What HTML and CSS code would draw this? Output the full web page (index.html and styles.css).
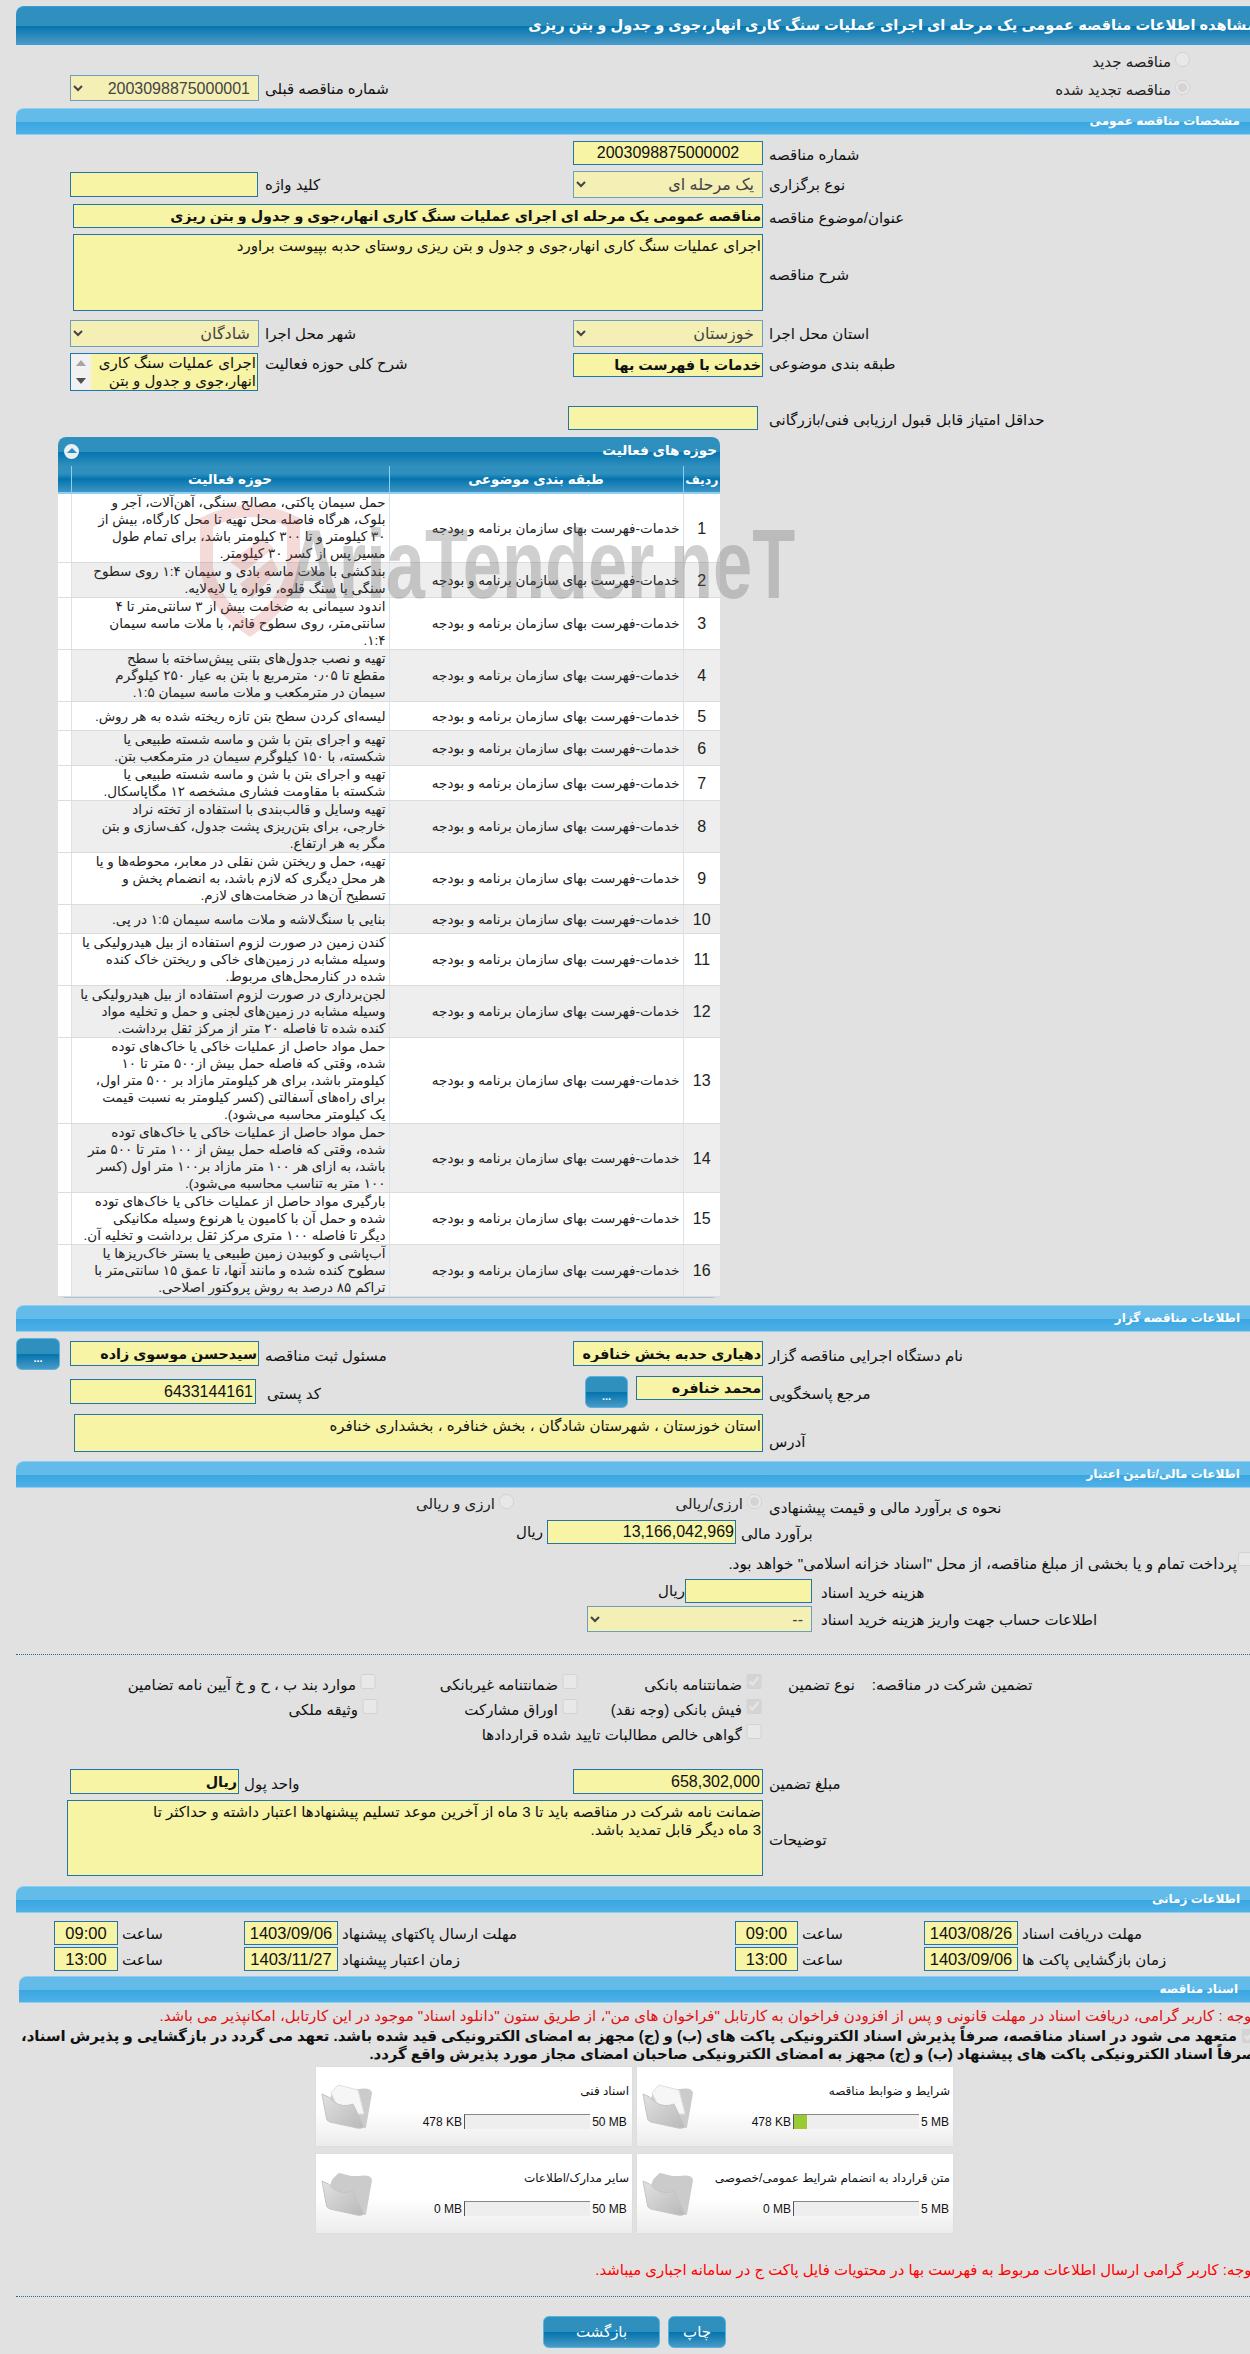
FILE: index.html
```html
<!DOCTYPE html>
<html lang="fa">
<head>
    <meta charset="UTF-8">
    <title>مشاهده اطلاعات مناقصه</title>
    <link rel="stylesheet" href="styles.css">
</head>
<body>
<div class="page">
    <div class="title-bar">مشاهده اطلاعات مناقصه عمومی یک مرحله ای اجرای عملیات سنگ کاری انهار،جوی و جدول و بتن ریزی</div>

    <div class="radio-row first"><label class="opt"><input type="radio" disabled><span>مناقصه جدید</span></label></div>
    <div class="row small-gap">
        <select class="sel ml digits" disabled dir="rtl"><option>2003098875000001</option></select>
        <div class="lbl">شماره مناقصه قبلی</div>
        <div></div>
        <div class="radio-cell"><label class="opt"><input type="radio" checked disabled><span>مناقصه تجدید شده</span></label></div>
    </div>

    <div class="section">مشخصات مناقصه عمومی</div>

    <div class="row">
        <div></div><div></div>
        <input class="in num centered" value="2003098875000002" readonly dir="rtl">
        <div class="lbl">شماره مناقصه</div>
    </div>
    <div class="row">
        <input class="in ml keyword" readonly>
        <div class="lbl">کلید واژه</div>
        <select class="sel" disabled dir="rtl"><option>یک مرحله ای</option></select>
        <div class="lbl">نوع برگزاری</div>
    </div>
    <div class="row">
        <input class="in strong span3 title-in" value="مناقصه عمومی یک مرحله ای اجرای عملیات سنگ کاری انهار،جوی و جدول و بتن ریزی" readonly dir="rtl">
        <div class="lbl">عنوان/موضوع مناقصه</div>
    </div>
    <div class="row">
        <textarea class="in span3 title-in desc" readonly dir="rtl">اجرای عملیات سنگ کاری انهار،جوی و جدول و بتن ریزی روستای حدبه بپیوست براورد</textarea>
        <div class="lbl mid">شرح مناقصه</div>
    </div>
    <div class="row gap9">
        <select class="sel ml" disabled dir="rtl"><option>شادگان</option></select>
        <div class="lbl">شهر محل اجرا</div>
        <select class="sel" disabled dir="rtl"><option>خوزستان</option></select>
        <div class="lbl">استان محل اجرا</div>
    </div>
    <div class="row">
        <div class="listbox ml">
            <div class="listbar"><i class="up"></i><i class="down"></i></div>
            <div class="listtext">اجرای عملیات سنگ کاری<br>انهار،جوی و جدول و بتن</div>
        </div>
        <div class="lbl tight">شرح کلی حوزه فعالیت</div>
        <input class="in strong" value="خدمات با فهرست بها" readonly dir="rtl">
        <div class="lbl tight">طبقه بندی موضوعی</div>
    </div>
    <div class="row gap15">
        <div></div><div></div>
        <input class="in shift" readonly>
        <div class="lbl">حداقل امتیاز قابل قبول ارزیابی فنی/بازرگانی</div>
    </div>

    <div class="panel">
        <div class="panel-title"><span class="collapse"></span>حوزه های فعالیت</div>
        <table class="grid">
            <colgroup><col class="c-no"><col class="c-cat"><col class="c-act"><col class="c-end"></colgroup>
            <tr><th>ردیف</th><th>طبقه بندی موضوعی</th><th>حوزه فعالیت</th><th></th></tr>
            <tr><td class="no">1</td><td>خدمات-فهرست بهای سازمان برنامه و بودجه</td><td class="act">حمل سیمان پاکتی، مصالح سنگی، آهن‌آلات، آجر و<br>بلوک، هرگاه فاصله محل تهیه تا محل کارگاه، بیش از<br>۳۰ کیلومتر و تا ۳۰۰ کیلومتر باشد، برای تمام طول<br>مسیر پس از کسر ۳۰ کیلومتر.</td><td></td></tr>
            <tr><td class="no">2</td><td>خدمات-فهرست بهای سازمان برنامه و بودجه</td><td class="act">بندکشی با ملات ماسه بادی و سیمان ۱:۴ روی سطوح<br>سنگی با سنگ قلوه، قواره یا لایه‌لایه.</td><td></td></tr>
            <tr><td class="no">3</td><td>خدمات-فهرست بهای سازمان برنامه و بودجه</td><td class="act">اندود سیمانی به ضخامت بیش از ۳ سانتی‌متر تا ۴<br>سانتی‌متر، روی سطوح قائم، با ملات ماسه سیمان<br>۱:۴.</td><td></td></tr>
            <tr><td class="no">4</td><td>خدمات-فهرست بهای سازمان برنامه و بودجه</td><td class="act">تهیه و نصب جدول‌های بتنی پیش‌ساخته با سطح<br>مقطع تا ۰٫۰۵ مترمربع با بتن به عیار ۲۵۰ کیلوگرم<br>سیمان در مترمکعب و ملات ماسه سیمان ۱:۵.</td><td></td></tr>
            <tr><td class="no">5</td><td>خدمات-فهرست بهای سازمان برنامه و بودجه</td><td class="act">لیسه‌ای کردن سطح بتن تازه ریخته شده به هر روش.</td><td></td></tr>
            <tr><td class="no">6</td><td>خدمات-فهرست بهای سازمان برنامه و بودجه</td><td class="act">تهیه و اجرای بتن با شن و ماسه شسته طبیعی یا<br>شکسته، با ۱۵۰ کیلوگرم سیمان در مترمکعب بتن.</td><td></td></tr>
            <tr><td class="no">7</td><td>خدمات-فهرست بهای سازمان برنامه و بودجه</td><td class="act">تهیه و اجرای بتن با شن و ماسه شسته طبیعی یا<br>شکسته با مقاومت فشاری مشخصه ۱۲ مگاپاسکال.</td><td></td></tr>
            <tr><td class="no">8</td><td>خدمات-فهرست بهای سازمان برنامه و بودجه</td><td class="act">تهیه وسایل و قالب‌بندی با استفاده از تخته نراد<br>خارجی، برای بتن‌ریزی پشت جدول، کف‌سازی و بتن<br>مگر به هر ارتفاع.</td><td></td></tr>
            <tr><td class="no">9</td><td>خدمات-فهرست بهای سازمان برنامه و بودجه</td><td class="act">تهیه، حمل و ریختن شن نقلی در معابر، محوطه‌ها و یا<br>هر محل دیگری که لازم باشد، به انضمام پخش و<br>تسطیح آن‌ها در ضخامت‌های لازم.</td><td></td></tr>
            <tr><td class="no">10</td><td>خدمات-فهرست بهای سازمان برنامه و بودجه</td><td class="act">بنایی با سنگ‌لاشه و ملات ماسه سیمان ۱:۵ در پی.</td><td></td></tr>
            <tr><td class="no">11</td><td>خدمات-فهرست بهای سازمان برنامه و بودجه</td><td class="act">کندن زمین در صورت لزوم استفاده از بیل هیدرولیکی یا<br>وسیله مشابه در زمین‌های خاکی و ریختن خاک کنده<br>شده در کنارمحل‌های مربوط.</td><td></td></tr>
            <tr><td class="no">12</td><td>خدمات-فهرست بهای سازمان برنامه و بودجه</td><td class="act">لجن‌برداری در صورت لزوم استفاده از بیل هیدرولیکی یا<br>وسیله مشابه در زمین‌های لجنی و حمل و تخلیه مواد<br>کنده شده تا فاصله ۲۰ متر از مرکز ثقل برداشت.</td><td></td></tr>
            <tr><td class="no">13</td><td>خدمات-فهرست بهای سازمان برنامه و بودجه</td><td class="act">حمل مواد حاصل از عملیات خاکی یا خاک‌های توده<br>شده، وقتی که فاصله حمل بیش از۵۰۰ متر تا ۱۰<br>کیلومتر باشد، برای هر کیلومتر مازاد بر ۵۰۰ متر اول،<br>برای راه‌های آسفالتی (کسر کیلومتر به نسبت قیمت<br>یک کیلومتر محاسبه می‌شود).</td><td></td></tr>
            <tr><td class="no">14</td><td>خدمات-فهرست بهای سازمان برنامه و بودجه</td><td class="act">حمل مواد حاصل از عملیات خاکی یا خاک‌های توده<br>شده، وقتی که فاصله حمل بیش از ۱۰۰ متر تا ۵۰۰ متر<br>باشد، به ازای هر ۱۰۰ متر مازاد بر۱۰۰ متر اول (کسر<br>۱۰۰ متر به تناسب محاسبه می‌شود).</td><td></td></tr>
            <tr><td class="no">15</td><td>خدمات-فهرست بهای سازمان برنامه و بودجه</td><td class="act">بارگیری مواد حاصل از عملیات خاکی یا خاک‌های توده<br>شده و حمل آن با کامیون یا هرنوع وسیله مکانیکی<br>دیگر تا فاصله ۱۰۰ متری مرکز ثقل برداشت و تخلیه آن.</td><td></td></tr>
            <tr><td class="no">16</td><td>خدمات-فهرست بهای سازمان برنامه و بودجه</td><td class="act">آب‌پاشی و کوبیدن زمین طبیعی یا بستر خاک‌ریزها یا<br>سطوح کنده شده و مانند آنها، تا عمق ۱۵ سانتی‌متر با<br>تراکم ۸۵ درصد به روش پروکتور اصلاحی.</td><td></td></tr>
        </table>
        <svg class="wm-logo" viewBox="0 0 100 137">
            <path fill-rule="evenodd" d="M0 18Q50 -8 100 18L100 70Q92 110 50 137Q8 110 0 70ZM13 27L13 68Q20 100 50 121Q80 100 87 68L87 27Q50 7 13 27Z"/>
            <path d="M30 62L62 38L74 48L44 72ZM40 84L72 58L78 70L52 98Z"/>
        </svg>
        <div class="wm-text">AriaTender.neT</div>
    </div>

    <div class="section">اطلاعات مناقصه گزار</div>

    <div class="row">
        <div class="with-btn">
            <button class="btn dots">...</button>
            <input class="in strong low person" value="سیدحسن موسوی زاده" readonly dir="rtl">
        </div>
        <div class="lbl drop">مسئول ثبت مناقصه</div>
        <input class="in strong low" value="دهیاری حدبه بخش خنافره" readonly dir="rtl">
        <div class="lbl drop">نام دستگاه اجرایی مناقصه گزار</div>
    </div>
    <div class="row">
        <input class="in num low ml postal" value="6433144161" readonly dir="rtl">
        <div class="lbl drop pad-postal">کد پستی</div>
        <div class="contact">
            <button class="btn dots small">...</button>
            <input class="in strong contact-in" value="محمد خنافره" readonly dir="rtl">
        </div>
        <div class="lbl drop">مرجع پاسخگویی</div>
    </div>
    <div class="row">
        <textarea class="in span3 addr" readonly dir="rtl">استان خوزستان ، شهرستان شادگان ، بخش خنافره ، بخشداری خنافره</textarea>
        <div class="lbl bottom">آدرس</div>
    </div>

    <div class="section gap-sec">اطلاعات مالی/تامین اعتبار</div>

    <div class="row">
        <div class="fin-opts">
            <label class="opt wide"><input type="radio" checked disabled><span>ارزی/ریالی</span></label>
            <label class="opt"><input type="radio" disabled><span>ارزی و ریالی</span></label>
        </div>
        <div class="lbl">نحوه ی برآورد مالی و قیمت پیشنهادی</div>
    </div>
    <div class="amount">
        <div class="unit">ریال</div>
        <input class="in num est" value="13,166,042,969" readonly dir="rtl">
        <div class="lbl">برآورد مالی</div>
    </div>
    <div class="pay">
        <input type="checkbox" disabled>
        <span>پرداخت تمام و یا بخشی از مبلغ مناقصه، از محل "اسناد خزانه اسلامی" خواهد بود.</span>
    </div>
    <div class="doc-cost">
        <div class="unit">ریال</div>
        <input class="in cost" readonly>
        <div class="lbl">هزینه خرید اسناد</div>
    </div>
    <div class="account">
        <select class="sel acc" disabled dir="rtl"><option>--</option></select>
        <div class="lbl">اطلاعات حساب جهت واریز هزینه خرید اسناد</div>
    </div>

    <div class="dotted first-dot"></div>

    <div class="guar">
        <label class="chk nudge"><input type="checkbox" disabled><span>موارد بند ب ، ح و خ آیین نامه تضامین</span></label>
        <label class="chk"><input type="checkbox" disabled><span>ضمانتنامه غیربانکی</span></label>
        <label class="chk"><input type="checkbox" checked disabled><span>ضمانتنامه بانکی</span></label>
        <div class="guar-lbl"><span>نوع تضمین</span><span>تضمین شرکت در مناقصه:</span></div>

        <label class="chk"><input type="checkbox" disabled><span>وثیقه ملکی</span></label>
        <label class="chk"><input type="checkbox" disabled><span>اوراق مشارکت</span></label>
        <label class="chk"><input type="checkbox" checked disabled><span>فیش بانکی (وجه نقد)</span></label>
        <div></div>

        <div></div><div></div>
        <label class="chk"><input type="checkbox" disabled><span>گواهی خالص مطالبات تایید شده قراردادها</span></label>
        <div></div>
    </div>

    <div class="row gap-guar">
        <input class="in strong low ml unit-in" value="ریال" readonly dir="rtl">
        <div class="lbl drop pad-unit">واحد پول</div>
        <input class="in num low" value="658,302,000" readonly dir="rtl">
        <div class="lbl drop">مبلغ تضمین</div>
    </div>
    <div class="row">
        <textarea class="in span3 notes" readonly dir="rtl">ضمانت نامه شرکت در مناقصه باید تا 3 ماه از آخرین موعد تسلیم پیشنهادها اعتبار داشته و حداکثر تا
3 ماه دیگر قابل تمدید باشد.</textarea>
        <div class="lbl mid">توضیحات</div>
    </div>

    <div class="section gap-time">اطلاعات زمانی</div>

    <div class="times">
        <input class="in num-d" value="09:00" readonly>
        <div class="lbl-t">ساعت</div>
        <input class="in num-d" value="1403/09/06" readonly>
        <div class="lbl-t">مهلت ارسال پاکتهای پیشنهاد</div>
        <input class="in num-d" value="09:00" readonly>
        <div class="lbl-t">ساعت</div>
        <input class="in num-d" value="1403/08/26" readonly>
        <div class="lbl-t">مهلت دریافت اسناد</div>

        <input class="in num-d" value="13:00" readonly>
        <div class="lbl-t">ساعت</div>
        <input class="in num-d" value="1403/11/27" readonly>
        <div class="lbl-t">زمان اعتبار پیشنهاد</div>
        <input class="in num-d" value="13:00" readonly>
        <div class="lbl-t">ساعت</div>
        <input class="in num-d" value="1403/09/06" readonly>
        <div class="lbl-t">زمان بازگشایی پاکت ها</div>
    </div>

    <div class="section docs-bar">اسناد مناقصه</div>

    <div class="note">توجه : کاربر گرامی، دریافت اسناد در مهلت قانونی و پس از افزودن فراخوان به کارتابل "فراخوان های من"، از طریق ستون "دانلود اسناد" موجود در این کارتابل، امکانپذیر می باشد.</div>
    <div class="pledge">
        <input type="checkbox" checked disabled>متعهد می شود در اسناد مناقصه، صرفاً پذیرش اسناد الکترونیکی پاکت های (ب) و (ج) مجهز به امضای الکترونیکی قید شده باشد. تعهد می گردد در بازگشایی و پذیرش اسناد،<br>صرفاً اسناد الکترونیکی پاکت های پیشنهاد (ب) و (ج) مجهز به امضای الکترونیکی صاحبان امضای مجاز مورد پذیرش واقع گردد.
    </div>

    <div class="files">
        <div class="file">
            <svg class="folder" viewBox="0 0 52 46"><use href="#folder-back"/><path class="paper" d="M10 9L17 1L37 6L43 30L20 30Z"/><use href="#folder-front"/></svg>
            <div class="file-body">
                <div class="file-name">اسناد فنی</div>
                <div class="meter"><span class="cap big">50 MB</span><div class="bar"></div><span class="cap">478 KB</span></div>
            </div>
        </div>
        <div class="file">
            <svg class="folder" viewBox="0 0 52 46"><use href="#folder-back"/><path class="paper" d="M10 9L17 1L37 6L43 30L20 30Z"/><use href="#folder-front"/></svg>
            <div class="file-body">
                <div class="file-name">شرایط و ضوابط مناقصه</div>
                <div class="meter"><span class="cap">5 MB</span><div class="bar"><div class="fill" style="width: 10%"></div></div><span class="cap">478 KB</span></div>
            </div>
        </div>
        <div class="file">
            <svg class="folder" viewBox="0 0 52 46"><use href="#folder-back"/><use href="#folder-front"/></svg>
            <div class="file-body">
                <div class="file-name">سایر مدارک/اطلاعات</div>
                <div class="meter"><span class="cap big">50 MB</span><div class="bar"></div><span class="cap">0 MB</span></div>
            </div>
        </div>
        <div class="file">
            <svg class="folder" viewBox="0 0 52 46"><use href="#folder-back"/><use href="#folder-front"/></svg>
            <div class="file-body">
                <div class="file-name">متن قرارداد به انضمام شرایط عمومی/خصوصی</div>
                <div class="meter"><span class="cap">5 MB</span><div class="bar"></div><span class="cap">0 MB</span></div>
            </div>
        </div>
    </div>

    <div class="note second">توجه: کاربر گرامی ارسال اطلاعات مربوط به فهرست بها در محتویات فایل پاکت ج در سامانه اجباری میباشد.</div>

    <div class="dotted last-dot"></div>

    <div class="actions">
        <button class="btn back">بازگشت</button>
        <button class="btn print">چاپ</button>
    </div>
    <div class="foot"></div>
</div>

<svg class="defs" width="0" height="0">
    <defs>
        <linearGradient id="fold" x1="0" y1="0" x2="1" y2="1"><stop offset="0" stop-color="#e2e2e2"/><stop offset="1" stop-color="#b8b8b8"/></linearGradient>
        <path id="folder-back" fill="#cbcbcb" stroke="#cbcbcb" stroke-width="2" stroke-linejoin="round" d="M12 9L18 3L30 6L38 6Q49 4 50 9L44 43L8 20Z"/>
        <path id="folder-front" fill="url(#fold)" stroke="#c4c4c4" stroke-linejoin="round" d="M1 10Q8 12 13 18Q22 24 32 20L43 43Q40 45 36 44L9 38Q5 37 5 32Z"/>
    </defs>
</svg>
</body>
</html>
```

FILE: styles.css
```css
html, body {
    margin: 0;
    padding: 0;
    width: 1250px;
    height: 2354px;
    overflow: hidden;
    background-color: #e1e1e1;
}

body {
    font-family: "Liberation Sans", "DejaVu Sans", sans-serif;
    font-size: 15px;
    color: #111;
}

.page {
    width: 1240px;
    margin-left: 16px;
    padding-top: 6px;
}

/* Bars */
.title-bar {
    height: 39px;
    box-sizing: border-box;
    line-height: 36px;
    direction: rtl;
    white-space: nowrap;
    font-size: 14.6px;
    font-weight: bold;
    color: #fff;
    border-radius: 8px 0 0 0;
    border-top: 1px solid #3a9be0;
    border-bottom: 1px solid #3a9be0;
    background: linear-gradient(#2f8fbf 0%, #2f8fbc 50%, #0474ae 51%, #4a9ac6 100%);
}

.section {
    height: 27px;
    box-sizing: border-box;
    margin-top: 7px;
    padding-right: 16px;
    line-height: 24px;
    direction: rtl;
    font-size: 12px;
    font-weight: bold;
    color: #fff;
    border-radius: 8px 0 0 0;
    border-top: 1px solid #8ccff2;
    border-bottom: 1px solid #8ccff2;
    background: linear-gradient(#62bbe9 0%, #62bbe9 50%, #39a6e1 51%, #4fb1e6 100%);
}

.gap-sec { margin-top: 9px; }
.gap-time { margin-top: 10px; }
.docs-bar { margin-top: 5px; margin-left: 3px; padding-right: 18px; }

/* Form rows */
.row {
    display: grid;
    grid-template-columns: 243px 314px 190px 1fr;
    align-items: start;
    margin-top: 6px;
}

.small-gap { margin-top: 3px; }
.gap9 { margin-top: 9px; }
.gap15 { margin-top: 15px; }
.gap-guar { margin-top: 17px; }

.lbl {
    direction: rtl;
    text-align: left;
    white-space: nowrap;
    padding-left: 6px;
    height: 24px;
    line-height: 28px;
}

.lbl.mid { align-self: center; }
.lbl.tight { height: auto; line-height: 18px; padding-top: 2px; }
.lbl.drop { padding-top: 4px; }
.lbl.bottom { align-self: end; height: 20px; line-height: 20px; }
.pad-postal { padding-left: 8px; }
.pad-unit { margin-left: -21px; }

.in {
    height: 24px;
    width: 100%;
    box-sizing: border-box;
    margin: 0;
    padding: 0 1px;
    font-family: "Liberation Sans", "DejaVu Sans", sans-serif;
    font-size: 15px;
    color: #111;
    background-color: #f7f4a5;
    border: 1px solid #2275a8;
    border-radius: 0;
    outline: none;
    resize: none;
    overflow: hidden;
    display: block;
}

textarea.in { padding: 2px 1px; line-height: 18px; }
.num { font-size: 16px; text-align: right; padding-right: 2px; }
.centered { text-align: center; padding: 0; }
.strong { font-size: 14.3px; font-weight: bold; }
.low { margin-top: 3px; height: 25px; }

.sel {
    height: 27px;
    width: 100%;
    box-sizing: border-box;
    margin: 0;
    padding: 0 4px;
    font-family: "Liberation Sans", "DejaVu Sans", sans-serif;
    font-size: 16px;
    color: #444;
    opacity: 1;
    background-color: #f3efb5;
    border: 1px solid #6d9dbf;
    border-radius: 0;
}

.digits { height: 26px; }

.ml { margin-left: 54px; width: calc(100% - 54px); }
.keyword { margin-top: 1px; width: 188px; height: 25px; }
.postal { width: 186px; }
.unit-in { width: 169px; }
.span3 { grid-column: 1 / 4; }
.title-in { margin-left: 57px; width: calc(100% - 57px); }
.desc { height: 77px; }
.addr { height: 38px; margin-left: 58px; width: calc(100% - 58px); }
.notes { height: 76px; margin-left: 51px; width: calc(100% - 51px); }
.shift { margin-left: -5px; }

.listbox {
    display: flex;
    height: 38px;
    box-sizing: border-box;
    width: 188px;
    background-color: #f7f4a5;
    border: 1px solid #2275a8;
    overflow: hidden;
}

.listbar {
    width: 20px;
    flex: none;
    background-color: #f1f1f1;
    display: flex;
    flex-direction: column;
    align-items: center;
    justify-content: space-around;
}

.listbar i {
    width: 0;
    height: 0;
    border-left: 5px solid transparent;
    border-right: 5px solid transparent;
}

.listbar .up { border-bottom: 6px solid #a5a5a5; }
.listbar .down { border-top: 6px solid #505050; }

.listtext {
    flex: 1;
    direction: rtl;
    white-space: nowrap;
    line-height: 18px;
    padding-right: 1px;
}

/* Radios and checks */
.radio-row {
    direction: rtl;
    padding-right: 66px;
}

.first { margin-top: 7px; height: 20px; }

.radio-cell {
    direction: rtl;
    padding-right: 66px;
    padding-top: 5px;
}

.opt {
    display: inline-flex;
    direction: rtl;
    align-items: flex-start;
    gap: 4px;
    white-space: nowrap;
    color: #222;
    line-height: 20px;
}

.opt input, .chk input, .pay input, .pledge input {
    margin: 0;
    opacity: .55;
    flex: none;
}

.opt input { width: 15px; height: 15px; }

.fin-opts {
    grid-column: 1 / 4;
    display: flex;
    direction: rtl;
    padding-right: 1px;
    height: 24px;
}

.opt.wide { width: 248px; }

/* Lines that leave the main grid */
.amount, .doc-cost, .account {
    display: flex;
    align-items: flex-start;
}

.amount { margin-top: 2px; margin-left: 503px; }
.doc-cost { margin-top: 7px; margin-left: 646px; }
.account { margin-top: 3px; margin-left: 571px; }

.unit { direction: rtl; line-height: 24px; width: 24px; margin-right: 4px; text-align: left; }
.doc-cost .unit { margin-right: 0; width: 23px; }
.est { width: 189px; padding-right: 1px; }
.cost { width: 127px; }
.acc { width: 225px; height: 26px; }
.doc-cost .lbl, .account .lbl { padding-left: 9px; }
.amount .lbl { padding-left: 5px; }

.pay {
    display: flex;
    direction: rtl;
    margin-top: 8px;
    padding-right: 4px;
    height: 20px;
    gap: 1px;
    align-items: flex-start;
    font-size: 15.3px;
    line-height: 24px;
    white-space: nowrap;
}

.pay input { width: 14px; height: 14px; }

.dotted { border-top: 1px dotted #1c6e9e; }
.first-dot { margin-top: 22px; }
.last-dot { margin-top: 16px; }

/* Guarantee */
.guar {
    display: grid;
    grid-template-columns: 362px 200px 184px 1fr;
    grid-auto-rows: 25px;
    margin-top: 19px;
}

.chk {
    display: flex;
    direction: rtl;
    align-items: flex-start;
    gap: 4px;
    white-space: nowrap;
}

.chk input { width: 16px; height: 15px; }
.chk span { line-height: 22px; }
.nudge { padding-right: 2px; }

.guar-lbl {
    display: flex;
    gap: 17px;
    padding-left: 26px;
    line-height: 22px;
    white-space: nowrap;
}

.guar-lbl span { direction: rtl; }

/* Buttons */
.btn {
    display: block;
    margin: 0;
    padding: 0;
    font-family: "Liberation Sans", "DejaVu Sans", sans-serif;
    color: #fff;
    border: 1px solid #59b3e0;
    border-radius: 6px;
    background: linear-gradient(#2f8fbf 0%, #2f8fbc 50%, #0474ae 51%, #4a9ac6 100%);
}

.dots { width: 44px; height: 32px; font-weight: bold; font-size: 11px; padding-top: 8px; }
.dots.small { width: 43px; }

.with-btn { display: flex; gap: 10px; }
.person { width: 189px; }

.contact { display: flex; justify-content: flex-end; gap: 8px; }
.contact-in { width: 127px; height: 24px; flex: none; }

/* Activity panel */
.panel {
    position: relative;
    width: 662px;
    margin: 7px 0 0 42px;
    background-color: #fff;
    border-radius: 8px;
    border-bottom: 1px solid #a8c4d8;
}

.panel-title {
    height: 29px;
    box-sizing: border-box;
    padding-right: 3px;
    line-height: 27px;
    direction: rtl;
    font-size: 13.5px;
    font-weight: bold;
    color: #fff;
    border-radius: 8px 8px 0 0;
    background: linear-gradient(#2f8fbf 0%, #2f8fbc 50%, #0474ae 51%, #2f8fbc 100%);
}

.collapse {
    position: absolute;
    left: 6px;
    top: 7px;
    width: 15px;
    height: 15px;
    border-radius: 50%;
    background-color: #e8eff5;
}

.collapse::after {
    content: "";
    position: absolute;
    left: 3px;
    top: 4px;
    border-left: 5px solid transparent;
    border-right: 5px solid transparent;
    border-bottom: 5px solid #2f8fbc;
}

.grid {
    width: 662px;
    table-layout: fixed;
    border-collapse: collapse;
    direction: rtl;
}

.c-no { width: 37px; }
.c-cat { width: 294px; }
.c-act { width: 318px; }
.c-end { width: 13px; }

.grid th {
    height: 26px;
    padding: 0;
    font-size: 13.5px;
    white-space: nowrap;
    color: #fff;
    border-left: 1px solid #8ccff2;
    border-bottom: 2px solid #8ccff2;
    background: linear-gradient(#2f8fbf 0%, #2f8fbc 30%, #0474ae 50%, #3f95c4 100%);
}

.grid th:first-child { font-size: 12.5px; }
.grid th:last-child { border-left: none; }

.grid td {
    height: 28px;
    padding: 0 3px;
    font-size: 13.5px;
    line-height: 17px;
    white-space: nowrap;
    color: #222;
    border-left: 1px solid #dbe3ea;
    border-bottom: 1px solid #dcdcdc;
}

.grid td:last-child {
    padding: 0;
    border-left: none;
}

.grid tr:nth-child(odd) td { background-color: #eee; }
.grid tr:nth-child(odd) td:last-child { background-color: #fff; }

.grid .no { text-align: center; font-size: 16px; }
.grid .act { padding: 0 3px 0 0; }

.wm-logo {
    position: absolute;
    left: 142px;
    top: 63px;
    width: 100px;
    height: 137px;
    fill: rgba(205, 70, 70, .2);
}

.wm-text {
    position: absolute;
    left: 230px;
    top: 77px;
    font-family: "Liberation Sans", sans-serif;
    font-size: 88px;
    font-weight: bold;
    line-height: 90px;
    white-space: nowrap;
    color: rgba(100, 100, 100, .3);
    transform-origin: left top;
    transform: scale(.8, 1.12);
}

/* Dates */
.times {
    display: grid;
    grid-template-columns: 64px 126px 94px 397px 63px 126px 94px 1fr;
    grid-auto-rows: 24px;
    row-gap: 2px;
    margin: 8px 0 0 38px;
}

.num-d { font-size: 16.5px; text-align: center; padding: 0; }

.lbl-t {
    direction: rtl;
    text-align: left;
    white-space: nowrap;
    padding-left: 4px;
    line-height: 26px;
    height: 24px;
}

/* Documents */
.note {
    direction: rtl;
    height: 20px;
    margin-top: 3px;
    font-size: 15px;
    line-height: 20px;
    white-space: nowrap;
    color: #e01010;
}

.note.second { margin-top: 27px; font-size: 14.9px; color: #f00; }

.pledge {
    direction: rtl;
    margin-top: 1px;
    height: 38px;
    font-size: 14.9px;
    font-weight: bold;
    line-height: 18px;
    white-space: nowrap;
    color: #111;
}

.pledge input { width: 14px; height: 14px; margin-left: 5px; vertical-align: -2px; }

.files {
    display: grid;
    grid-template-columns: 316px 316px;
    grid-auto-rows: 79px;
    gap: 8px 5px;
    margin: 2px 0 0 300px;
}

.file {
    display: flex;
    background: linear-gradient(#fff 0%, #fff 55%, #ececec 100%);
    box-shadow: 0 0 1px #cfcfcf;
}

.folder {
    width: 52px;
    height: 46px;
    margin: 17px 0 0 5px;
    flex: none;
}

.paper { fill: #f6f6f6; stroke: #dfdfdf; }
.defs { position: absolute; }

.file-body {
    flex: 1;
    direction: rtl;
    padding: 14px 3px 0 0;
    white-space: nowrap;
    font-size: 12px;
    line-height: 20px;
}

.meter {
    display: flex;
    align-items: flex-start;
    margin-top: 13px;
    padding-right: 2px;
    gap: 2px;
}

.cap { width: 27px; font-family: "Liberation Sans", sans-serif; font-size: 12px; line-height: 17px; direction: ltr; text-align: center; }
.cap.big { width: 35px; }
.cap:last-child { width: auto; }

.bar {
    width: 126px;
    height: 15px;
    box-sizing: border-box;
    direction: ltr;
    background-color: #eee;
    border-top: 1px solid #888;
    border-left: 1px solid #555;
}

.fill { height: 100%; background-color: #9acb34; }

.actions {
    display: flex;
    gap: 8px;
    margin: 19px 0 0 527px;
}

.back, .print { height: 32px; font-size: 15px; }
.back { width: 117px; }
.print { width: 58px; }

.foot {
    height: 1px;
    margin: 6px 0 0 -4px;
    background-color: #fff;
}
```
